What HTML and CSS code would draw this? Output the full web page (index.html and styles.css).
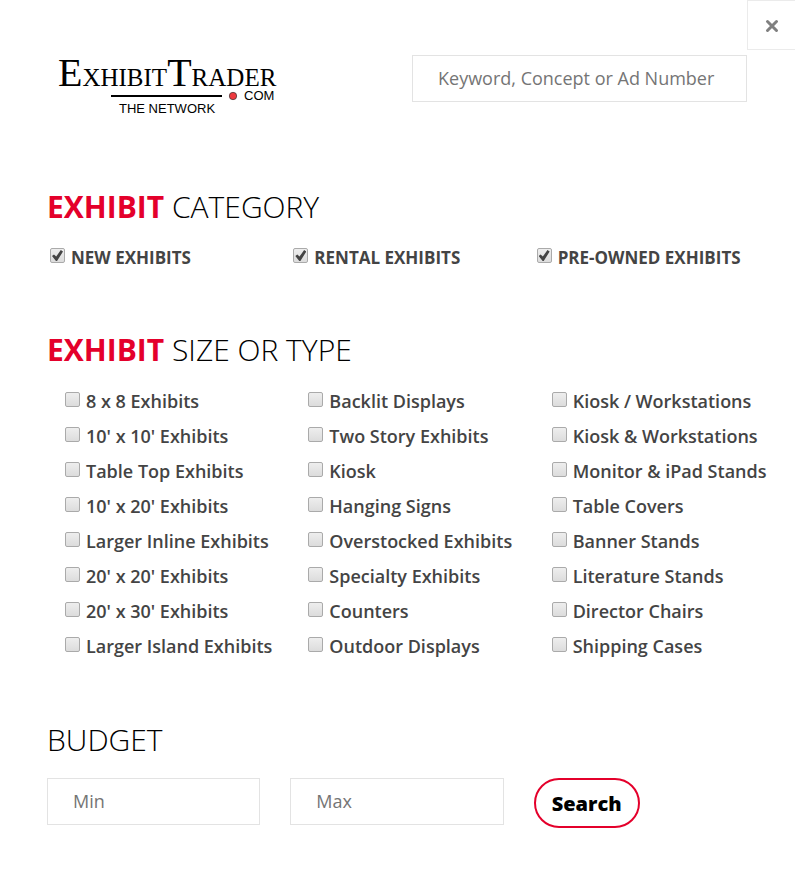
FILE: index.html
```
<!DOCTYPE html>
<html lang="en">
<head>
    <meta charset="utf-8">
    <meta name="viewport" content="width=device-width, initial-scale=1">
    <title>Exhibit Trader - Search</title>
    <link rel="stylesheet" href="styles.css">
</head>
<body>
    <button type="button" class="close-button" aria-label="Close">
        <svg width="14" height="14" viewBox="0 0 14 14"><path d="M2.5 2.5 L11.5 11.5 M11.5 2.5 L2.5 11.5"/></svg>
    </button>
    <form class="search-form">
        <div class="header">
            <a href="#" class="logo">
                <svg width="240" height="75" viewBox="0 0 240 75" role="img" aria-label="ExhibitTrader.com The Network">
                    <text x="11" y="41" class="logo-name"><tspan class="logo-cap">E</tspan>XHIBIT<tspan class="logo-cap">T</tspan>RADER</text>
                    <rect x="64" y="50" width="111" height="2"/>
                    <circle cx="186" cy="51" r="3.7" fill="#ee3a3f" stroke="#333" stroke-width="0.7"/>
                    <text x="197" y="55" class="logo-small">COM</text>
                    <text x="72" y="68" class="logo-small">THE NETWORK</text>
                </svg>
            </a>
            <input type="text" class="text-input" placeholder="Keyword, Concept or Ad Number" aria-label="Keyword, Concept or Ad Number">
        </div>

        <section>
            <h2><b>EXHIBIT</b> CATEGORY</h2>
            <div class="columns category">
                <label><input type="checkbox" checked>NEW EXHIBITS</label>
                <label><input type="checkbox" checked>RENTAL EXHIBITS</label>
                <label><input type="checkbox" checked>PRE-OWNED EXHIBITS</label>
            </div>
        </section>

        <section>
            <h2><b>EXHIBIT</b> SIZE OR TYPE</h2>
            <div class="columns types">
                <div>
                    <label><input type="checkbox">8 x 8 Exhibits</label>
                    <label><input type="checkbox">10' x 10' Exhibits</label>
                    <label><input type="checkbox">Table Top Exhibits</label>
                    <label><input type="checkbox">10' x 20' Exhibits</label>
                    <label><input type="checkbox">Larger Inline Exhibits</label>
                    <label><input type="checkbox">20' x 20' Exhibits</label>
                    <label><input type="checkbox">20' x 30' Exhibits</label>
                    <label><input type="checkbox">Larger Island Exhibits</label>
                </div>
                <div>
                    <label><input type="checkbox">Backlit Displays</label>
                    <label><input type="checkbox">Two Story Exhibits</label>
                    <label><input type="checkbox">Kiosk</label>
                    <label><input type="checkbox">Hanging Signs</label>
                    <label><input type="checkbox">Overstocked Exhibits</label>
                    <label><input type="checkbox">Specialty Exhibits</label>
                    <label><input type="checkbox">Counters</label>
                    <label><input type="checkbox">Outdoor Displays</label>
                </div>
                <div>
                    <label><input type="checkbox">Kiosk / Workstations</label>
                    <label><input type="checkbox">Kiosk &amp; Workstations</label>
                    <label><input type="checkbox">Monitor &amp; iPad Stands</label>
                    <label><input type="checkbox">Table Covers</label>
                    <label><input type="checkbox">Banner Stands</label>
                    <label><input type="checkbox">Literature Stands</label>
                    <label><input type="checkbox">Director Chairs</label>
                    <label><input type="checkbox">Shipping Cases</label>
                </div>
            </div>
        </section>

        <section>
            <h2>BUDGET</h2>
            <div class="columns budget">
                <input type="text" class="text-input" placeholder="Min" aria-label="Minimum budget">
                <input type="text" class="text-input" placeholder="Max" aria-label="Maximum budget">
                <button type="submit" class="search-button">Search</button>
            </div>
        </section>
    </form>
</body>
</html>
```
FILE: styles.css
```
* {
    box-sizing: border-box;
}

body {
    margin: 0;
    background-color: #fff;
    color: #444;
    font-family: "Open Sans", sans-serif;
    font-size: 18px;
}

.search-form {
    padding: 45px 48px 60px 47px;
}

.close-button {
    position: absolute;
    top: 0;
    right: 0;
    width: 48px;
    height: 50px;
    padding: 2px 0 0;
    background-color: #fff;
    border: 1px solid #ebebeb;
    border-right: none;
    cursor: pointer;
}

.close-button svg {
    display: block;
    margin: 0 auto;
    stroke: #808080;
    stroke-width: 3;
    stroke-linecap: round;
}

.header {
    display: grid;
    grid-template-columns: 1fr 1fr;
    gap: 30px;
    align-items: start;
    margin-bottom: 72px;
}

.header .text-input {
    margin-top: 10px;
}

.logo svg {
    display: block;
}

.logo-name {
    font-family: "Liberation Serif", serif;
    font-size: 25px;
}

.logo-cap {
    font-size: 40px;
}

.logo-small {
    font-family: "Liberation Sans", sans-serif;
    font-size: 13px;
}

section {
    margin-bottom: 60px;
}

section:last-child {
    margin-bottom: 0;
}

h2 {
    margin: 0 0 18px;
    color: #000;
    font-size: 30px;
    font-weight: 300;
    line-height: 30px;
}

h2 b {
    color: #e4002b;
    font-weight: 700;
}

.columns {
    display: grid;
    grid-template-columns: repeat(3, minmax(0, 1fr));
    gap: 30px;
}

label {
    display: flex;
    align-items: center;
    line-height: 35px;
    white-space: nowrap;
}

.category label {
    font-size: 17px;
    font-weight: 700;
}

.types {
    padding: 1px 0;
}

.types label {
    padding-left: 15px;
    font-weight: 600;
}

input[type="checkbox"] {
    appearance: none;
    flex: none;
    display: grid;
    place-content: center;
    width: 15px;
    height: 15px;
    margin: 0 6px 4px 3px;
    border: 1px solid #aaa;
    border-radius: 2px;
    background: linear-gradient(#eee, #dcdcdc);
}

input[type="checkbox"]:checked::before {
    content: "";
    width: 11px;
    height: 11px;
    background-color: #444;
    clip-path: polygon(0 55%, 18% 42%, 38% 60%, 80% 0, 100% 14%, 46% 100%, 36% 100%);
}

.text-input {
    width: 100%;
    height: 47px;
    padding: 0 25px 2px;
    border: 1px solid #e3e3e3;
    background-color: #fff;
    color: #444;
    font: inherit;
}

.text-input::placeholder {
    color: #757575;
}

.budget {
    align-items: start;
    padding-top: 5px;
}

.search-button {
    justify-self: start;
    height: 50px;
    padding: 0 16px;
    border: 2px solid #e4002b;
    border-radius: 25px;
    background-color: #fff;
    color: #000;
    font: inherit;
    font-size: 20px;
    font-weight: 800;
    cursor: pointer;
}
```
